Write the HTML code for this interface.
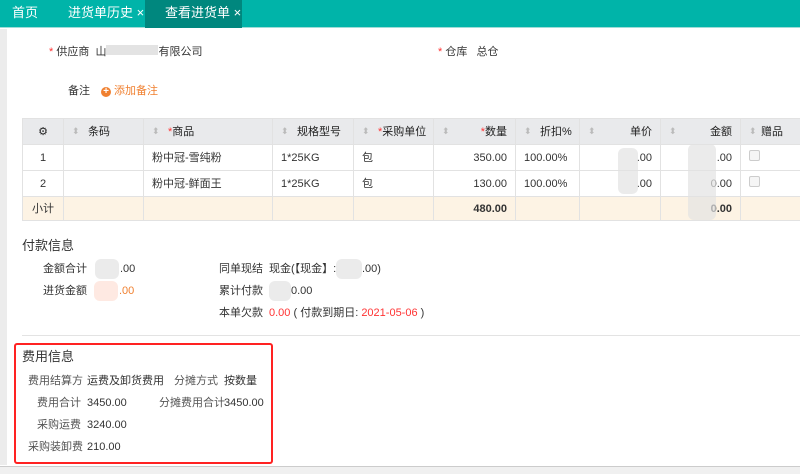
<!DOCTYPE html>
<html><head><meta charset="utf-8"><style>
*{margin:0;padding:0;box-sizing:border-box}
body{width:800px;height:474px;overflow:hidden;background:#fff;font-family:"Liberation Sans","Noto Sans CJK SC",sans-serif;font-size:11px;color:#333;position:relative}
.a{position:absolute;white-space:nowrap;line-height:14px}
.top{position:absolute;left:0;top:0;width:800px;height:28px;background:#00b4a9;border-bottom:1px solid #9fdcd7}
.tab{position:absolute;top:0;height:28px;line-height:26px;color:#fff;font-size:13px}
.r{color:#f33}
.blur{position:absolute;background:#e2e2e2;border-radius:6px;opacity:.7}
table{position:absolute;left:22px;top:118px;border-collapse:collapse;font-size:11px;table-layout:fixed;width:778px}
td,th{border:1px solid #e2e2e2;height:26px;padding:0 8px;font-weight:normal;line-height:14px;white-space:nowrap;overflow:hidden}
th{background:#e9eaec;text-align:left;color:#222;position:relative}
th.p{padding-left:24px}
tr.s td{background:#fdf3e4;height:24px}
.sort{position:absolute;left:8px;top:8px;color:#bbb;font-size:9px;line-height:9px}
.rt{text-align:right}
.cb{display:inline-block;width:11px;height:11px;border:1px solid #ccc;border-radius:2px;background:#f5f5f5}
</style></head><body>
<div class="top"></div>
<div class="tab" style="left:12px">首页</div>
<div class="tab" style="left:68px">进货单历史 ×</div>
<div class="tab" style="left:145px;width:97px;background:#00877e;padding-left:20px">查看进货单 ×</div>
<div class="a" style="left:0;top:29px;width:7px;height:436px;background:#ececec"></div>
<div class="a" style="left:0;top:466px;width:800px;height:8px;background:#f0f0f0;border-top:1px solid #ccc"></div>

<div class="a" style="left:49px;top:45px"><span class="r">*</span> 供应商 &nbsp;山<span style="display:inline-block;width:52px;height:10px;background:#e3e3e3"></span>有限公司</div>
<div class="a" style="left:438px;top:45px"><span class="r">*</span> 仓库 &nbsp; 总仓</div>
<div class="a" style="left:68px;top:84px">备注</div>
<div class="a" style="left:101px;top:84px;color:#f08030"><span style="display:inline-block;width:10px;height:10px;border-radius:5px;background:#f08030;color:#fff;font-size:10px;line-height:10px;text-align:center;font-weight:bold">+</span> 添加备注</div>

<table>
<colgroup><col style="width:41px"><col style="width:80px"><col style="width:129px"><col style="width:81px"><col style="width:80px"><col style="width:82px"><col style="width:64px"><col style="width:81px"><col style="width:80px"><col style="width:60px"></colgroup>
<tr><th style="text-align:center">⚙</th><th class="p"><span class="sort">⬍</span>条码</th><th class="p"><span class="sort">⬍</span><span class="r">*</span>商品</th><th class="p"><span class="sort">⬍</span>规格型号</th><th class="p"><span class="sort">⬍</span><span class="r">*</span>采购单位</th><th class="rt p"><span class="sort">⬍</span><span class="r">*</span>数量</th><th class="p"><span class="sort">⬍</span>折扣%</th><th class="rt p"><span class="sort">⬍</span>单价</th><th class="rt p"><span class="sort">⬍</span>金额</th><th class="p" style="padding-left:20px"><span class="sort">⬍</span>赠品</th></tr>
<tr><td style="text-align:center">1</td><td></td><td>粉中冠-雪纯粉</td><td>1*25KG</td><td>包</td><td class="rt">350.00</td><td>100.00%</td><td class="rt">.00</td><td class="rt">.00</td><td><span class="cb"></span></td></tr>
<tr><td style="text-align:center">2</td><td></td><td>粉中冠-鲜面王</td><td>1*25KG</td><td>包</td><td class="rt">130.00</td><td>100.00%</td><td class="rt">.00</td><td class="rt">0.00</td><td><span class="cb"></span></td></tr>
<tr class="s"><td style="text-align:center">小计</td><td></td><td></td><td></td><td></td><td class="rt"><b>480.00</b></td><td></td><td></td><td class="rt"><b>0.00</b></td><td></td></tr>
</table>
<div class="blur" style="left:618px;top:148px;width:20px;height:46px"></div>
<div class="blur" style="left:688px;top:144px;width:28px;height:76px"></div>

<div class="a" style="left:22px;top:238px;font-size:13px;line-height:16px">付款信息</div>
<div class="a" style="left:43px;top:262px">金额合计</div><div class="a" style="left:120px;top:262px">.00</div>
<div class="blur" style="left:95px;top:259px;width:24px;height:20px"></div>
<div class="a" style="left:43px;top:284px">进货金额</div><div class="a" style="left:119px;top:284px;color:#f08030">.00</div>
<div class="blur" style="left:94px;top:281px;width:24px;height:20px;background:#fde0d6"></div>
<div class="a" style="left:219px;top:262px">同单现结</div><div class="a" style="left:269px;top:262px">现金(【现金】:</div><div class="a" style="left:362px;top:262px">.00)</div>
<div class="blur" style="left:336px;top:259px;width:26px;height:20px"></div>
<div class="a" style="left:219px;top:284px">累计付款</div><div class="a" style="left:291px;top:284px">0.00</div>
<div class="blur" style="left:269px;top:281px;width:22px;height:20px"></div>
<div class="a" style="left:219px;top:306px">本单欠款</div><div class="a" style="left:269px;top:306px"><span class="r">0.00</span> ( 付款到期日: <span class="r">2021-05-06</span> )</div>
<div class="a" style="left:22px;top:335px;width:778px;height:1px;background:#e3e3e3"></div>

<div class="a" style="left:14px;top:343px;width:259px;height:121px;border:2px solid #f22;border-radius:3px"></div>
<div class="a" style="left:22px;top:349px;font-size:13px;line-height:16px">费用信息</div>
<div class="a" style="left:28px;top:374px;color:#555">费用结算方</div><div class="a" style="left:87px;top:374px">运费及卸货费用</div>
<div class="a" style="left:174px;top:374px;color:#555">分摊方式</div><div class="a" style="left:224px;top:374px">按数量</div>
<div class="a" style="left:37px;top:396px;color:#555">费用合计</div><div class="a" style="left:87px;top:396px">3450.00</div>
<div class="a" style="left:159px;top:396px;color:#555">分摊费用合计</div><div class="a" style="left:224px;top:396px">3450.00</div>
<div class="a" style="left:37px;top:418px;color:#555">采购运费</div><div class="a" style="left:87px;top:418px">3240.00</div>
<div class="a" style="left:28px;top:440px;color:#555">采购装卸费</div><div class="a" style="left:87px;top:440px">210.00</div>
</body></html>
